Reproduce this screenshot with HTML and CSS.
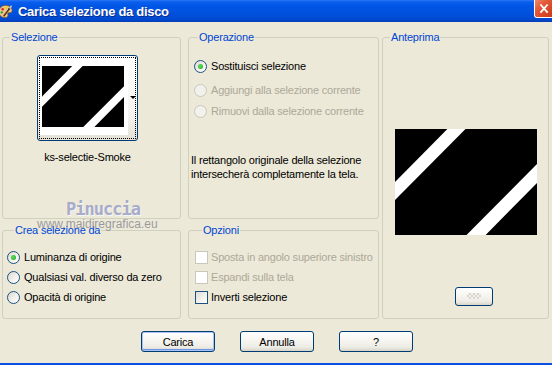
FILE: index.html
```html
<!DOCTYPE html>
<html lang="it">
<head>
    <meta charset="UTF-8">
    <meta name="viewport" content="width=device-width, initial-scale=1.0">
    <title>Carica selezione da disco</title>
    <link rel="stylesheet" href="styles.css">
</head>
<body>

<div class="window">
    <!-- Title bar -->
    <div class="titlebar">
        <svg class="app-icon" viewBox="0 0 16 16">
            <path d="M8 1.5c4 0 7 2.3 7 5.5 0 2-1.6 2.6-3 2.3-1.3-.3-2 .6-1.5 1.9.6 1.6-.6 3.3-3 3.3C3.8 14.5 1 12 1 8.3 1 4.5 4 1.5 8 1.5z" fill="#E8C890" stroke="#8A5A20" stroke-width=".8"/>
            <circle cx="5" cy="5.5" r="1.3" fill="#E02020"/>
            <circle cx="8.5" cy="4" r="1.3" fill="#F0D000"/>
            <circle cx="11.8" cy="5.2" r="1.2" fill="#2050E0"/>
            <circle cx="4" cy="9" r="1.2" fill="#20A020"/>
            <path d="M6 13 L13 4" stroke="#603010" stroke-width="1.6"/>
            <path d="M12.3 4.8 L14.5 1.8" stroke="#C0C0C0" stroke-width="1.8"/>
        </svg>
        <span class="title">Carica selezione da disco</span>
        <span class="close-btn">
            <svg viewBox="0 0 21 18" width="21" height="18">
                <path d="M6 4 L14 13 M14 4 L6 13" stroke="#fff" stroke-width="2"/>
            </svg>
        </span>
    </div>

    <div class="dialog">
        <div class="groups">

            <!-- Selezione -->
            <fieldset class="group group-selection">
                <legend class="group-title">Selezione</legend>
                <button type="button" class="thumb">
                    <span class="thumb-focus">
                        <span class="thumb-image">
                            <svg class="sel-image" width="82" height="61" viewBox="0 0 141 106" preserveAspectRatio="none">
                                <rect width="141" height="106" fill="#000"/>
                                <polygon points="52,0 70,0 0,71 0,53" fill="#fff"/>
                                <polygon points="141,35 141,54 90,106 71,106" fill="#fff"/>
                            </svg>
                        </span>
                        <span class="thumb-arrow"></span>
                    </span>
                </button>
                <div class="thumb-name">ks-selectie-Smoke</div>
            </fieldset>

            <!-- Operazione -->
            <fieldset class="group group-operation">
                <legend class="group-title">Operazione</legend>
                <div class="option-list">
                    <label class="option"><span class="radio radio-checked"></span>Sostituisci selezione</label>
                    <label class="option option-disabled op-second"><span class="radio"></span>Aggiungi alla selezione corrente</label>
                    <label class="option option-disabled op-third"><span class="radio"></span>Rimuovi dalla selezione corrente</label>
                </div>
                <p class="note">Il rettangolo originale della selezione<br>intersecherà completamente la tela.</p>
            </fieldset>

            <!-- Anteprima -->
            <fieldset class="group group-preview">
                <legend class="group-title">Anteprima</legend>
                <svg class="preview" width="142" height="106" viewBox="0 0 141 106" preserveAspectRatio="none">
                    <rect width="141" height="106" fill="#000"/>
                    <polygon points="52,0 70,0 0,71 0,53" fill="#fff"/>
                    <polygon points="141,35 141,54 90,106 71,106" fill="#fff"/>
                </svg>
                <button type="button" class="btn btn-small">
                    <svg width="14" height="7" viewBox="0 0 14 7">
                        <rect x="0" y="0" width="14" height="7" fill="#F2F1EC"/>
                        <rect x="2" y="0" width="2" height="2" fill="#D8D6CC"/>
                        <rect x="6" y="0" width="2" height="2" fill="#D8D6CC"/>
                        <rect x="10" y="0" width="2" height="2" fill="#D8D6CC"/>
                        <rect x="0" y="2" width="2" height="2" fill="#D8D6CC"/>
                        <rect x="4" y="2" width="2" height="2" fill="#D8D6CC"/>
                        <rect x="8" y="2" width="2" height="2" fill="#D8D6CC"/>
                        <rect x="12" y="2" width="2" height="2" fill="#D8D6CC"/>
                        <rect x="2" y="4" width="2" height="2" fill="#D8D6CC"/>
                        <rect x="6" y="4" width="2" height="2" fill="#D8D6CC"/>
                        <rect x="10" y="4" width="2" height="2" fill="#D8D6CC"/>
                    </svg>
                </button>
            </fieldset>

            <!-- Crea selezione da -->
            <fieldset class="group group-source">
                <legend class="group-title">Crea selezione da</legend>
                <label class="option"><span class="radio radio-checked"></span>Luminanza di origine</label>
                <label class="option"><span class="radio"></span>Qualsiasi val. diverso da zero</label>
                <label class="option"><span class="radio"></span>Opacità di origine</label>
            </fieldset>

            <!-- Opzioni -->
            <fieldset class="group group-options">
                <legend class="group-title">Opzioni</legend>
                <label class="option option-check option-disabled"><span class="checkbox"></span>Sposta in angolo superiore sinistro</label>
                <label class="option option-check option-disabled"><span class="checkbox"></span>Espandi sulla tela</label>
                <label class="option option-check"><span class="checkbox"></span>Inverti selezione</label>
            </fieldset>

        </div>

        <div class="actions">
            <button type="button" class="btn btn-default">Carica</button>
            <button type="button" class="btn">Annulla</button>
            <button type="button" class="btn">?</button>
        </div>
    </div>

    <!-- watermark over the dialog -->
    <div class="watermark">
        <div class="wm-name">Pinuccia</div>
        <div class="wm-site">www.maidiregrafica.eu</div>
    </div>
</div>

</body>
</html>
```

FILE: styles.css
```css
body {
  margin: 0;
  background: #ECE9D8;
  font-family: "Liberation Sans", Arial, sans-serif;
  font-size: 11px;
  letter-spacing: -0.2px;
  color: #000;
}

.window {
  position: relative;
  width: 552px;
  height: 365px;
  box-sizing: border-box;
  border-bottom: 2px solid #0B4FE3;
  background: #ECE9D8;
  overflow: hidden;
}

/* title bar */
.titlebar {
  height: 22px;
  display: flex;
  align-items: center;
  color: #fff;
  background: linear-gradient(#2C78F4 0, #0A5EEC 2px, #0256E6 6px, #0052DF 12px, #004DD7 17px, #0047CC 20px, #0A3CB4 22px);
}

.app-icon {
  width: 15px;
  height: 15px;
  margin-left: -2px;
  flex: none;
}

.title {
  margin-left: 5px;
  font-weight: bold;
  font-size: 13px;
  letter-spacing: -0.3px;
  text-shadow: 1px 1px #0F2A8A;
}

.close-btn {
  margin-left: auto;
  align-self: flex-start;
  width: 21px;
  height: 18px;
  margin-right: -3px;
  box-sizing: border-box;
  border: 1px solid #fff;
  border-top: none;
  border-radius: 0 0 3px 3px;
  background: linear-gradient(135deg, #F08A6A 0, #E2583A 35%, #D2401E 80%, #C03A18 100%);
  display: flex;
}

/* dialog body */
.dialog {
  padding: 9px 0 0 2px;
}

.groups {
  display: grid;
  grid-template-columns: 179px 7px 191px 3px 167px;
  grid-template-rows: 188px 95px;
  row-gap: 5px;
}

.group {
  margin: 0;
  padding: 0;
  min-width: 0;
  border: 1px solid #D0D0BF;
  border-radius: 3px;
}

.group-title {
  margin-left: 7px;
  padding: 0 1px;
  color: #0046D5;
  line-height: 13px;
}

.group-selection { grid-column: 1; grid-row: 1; }
.group-operation { grid-column: 3; grid-row: 1; }
.group-preview { grid-column: 5; grid-row: 1 / 3; }
.group-source { grid-column: 1; grid-row: 2; }
.group-options { grid-column: 3; grid-row: 2; }

/* Selezione */
.group-selection {
  display: flex;
  flex-direction: column;
  align-items: center;
  padding: 11px 8px 0 0;
}

.thumb {
  width: 101px;
  height: 86px;
  padding: 0;
  box-sizing: border-box;
  border: 1px solid #003C74;
  border-radius: 3px;
  background: linear-gradient(#FFFFFF, #F4F3EE 70%, #E3E0D6);
  display: flex;
}

.thumb-focus {
  position: relative;
  margin: 1px;
  flex: 1;
  border: 1px dotted #000;
  display: flex;
  align-items: flex-start;
}

.thumb-image {
  display: flex;
  padding: 8px 4px 8px 2px;
  background: #fff;
}

.thumb-arrow {
  position: absolute;
  left: 90px;
  top: 38px;
  width: 0;
  height: 0;
  border-left: 3px solid transparent;
  border-right: 3px solid transparent;
  border-top: 3px solid #000;
}

.thumb-name {
  margin-top: 10px;
  line-height: 13px;
}

/* options */
.option {
  display: flex;
  align-items: center;
  gap: 4px;
  height: 13px;
  line-height: 13px;
  white-space: nowrap;
}

.option-check {
  gap: 3px;
}

.option-disabled {
  color: #ACA899;
}

.radio {
  width: 13px;
  height: 13px;
  box-sizing: border-box;
  border: 1px solid #1C5180;
  border-radius: 50%;
  background: linear-gradient(135deg, #DCD9CF, #F4F3EE 60%, #FFFFFF);
  display: flex;
  align-items: center;
  justify-content: center;
  flex: none;
}

.option-disabled .radio {
  border-color: #CAC8BB;
  background: #F2F1EB;
}

.radio-checked::after {
  content: "";
  width: 5px;
  height: 5px;
  border-radius: 50%;
  background: radial-gradient(circle at 40% 40%, #5EE05E, #21A121);
}

.checkbox {
  width: 13px;
  height: 13px;
  box-sizing: border-box;
  border: 1px solid #1C5180;
  background: linear-gradient(135deg, #DCDCD7, #F4F3EE 60%, #FFFFFF);
  flex: none;
}

.option-disabled .checkbox {
  border-color: #CAC8BB;
  background: #FFFFFF;
}

/* Operazione */
.group-operation {
  padding: 16px 0 0 2px;
}

.option-list {
  padding-left: 3px;
}

.op-second {
  margin-top: 11px;
}

.op-third {
  margin-top: 8px;
}

.note {
  margin: 35px 0 0;
  line-height: 14px;
}

/* Anteprima */
.group-preview {
  display: flex;
  flex-direction: column;
  align-items: center;
}

.preview {
  margin-top: 85px;
  display: block;
}

/* Crea selezione da / Opzioni */
.group-source {
  padding: 14px 0 0 4px;
}

.group-options {
  padding: 14px 0 0 6px;
}

.group-source .option + .option,
.group-options .option + .option {
  margin-top: 7px;
}

/* buttons */
.actions {
  display: flex;
  justify-content: center;
  gap: 25px;
  margin-top: 12px;
}

.btn {
  width: 74px;
  height: 21px;
  box-sizing: border-box;
  border: 1px solid #003C74;
  border-radius: 3px;
  background: linear-gradient(#FFFFFF, #F6F5F0 45%, #ECEBE4 80%, #D8D3C6);
  font-family: "Liberation Sans", Arial, sans-serif;
  font-size: 11px;
  letter-spacing: -0.2px;
  color: #000;
  padding: 0;
  display: flex;
  align-items: center;
  justify-content: center;
}

.btn-default {
  box-shadow: inset 0 0 0 1px #A8C4F4, inset 0 -1px 0 1px #6C97E6;
}

.group-preview .btn-small {
  align-self: flex-start;
  margin: 52px 0 0 72px;
  width: 38px;
  height: 19px;
}

/* watermark */
.watermark {
  position: absolute;
  left: 37px;
  top: 201px;
  pointer-events: none;
}

.wm-name {
  margin-left: 29px;
  font-family: "DejaVu Sans Mono", monospace;
  font-weight: bold;
  font-size: 17px;
  letter-spacing: -1px;
  line-height: 16px;
  color: #A9ACC8;
  text-shadow: 1px 1px #F6F6FA;
}

.wm-site {
  font-family: "Liberation Sans", Arial, sans-serif;
  font-size: 12px;
  letter-spacing: 0;
  line-height: 14px;
  color: rgba(125, 125, 140, 0.75);
}
```
